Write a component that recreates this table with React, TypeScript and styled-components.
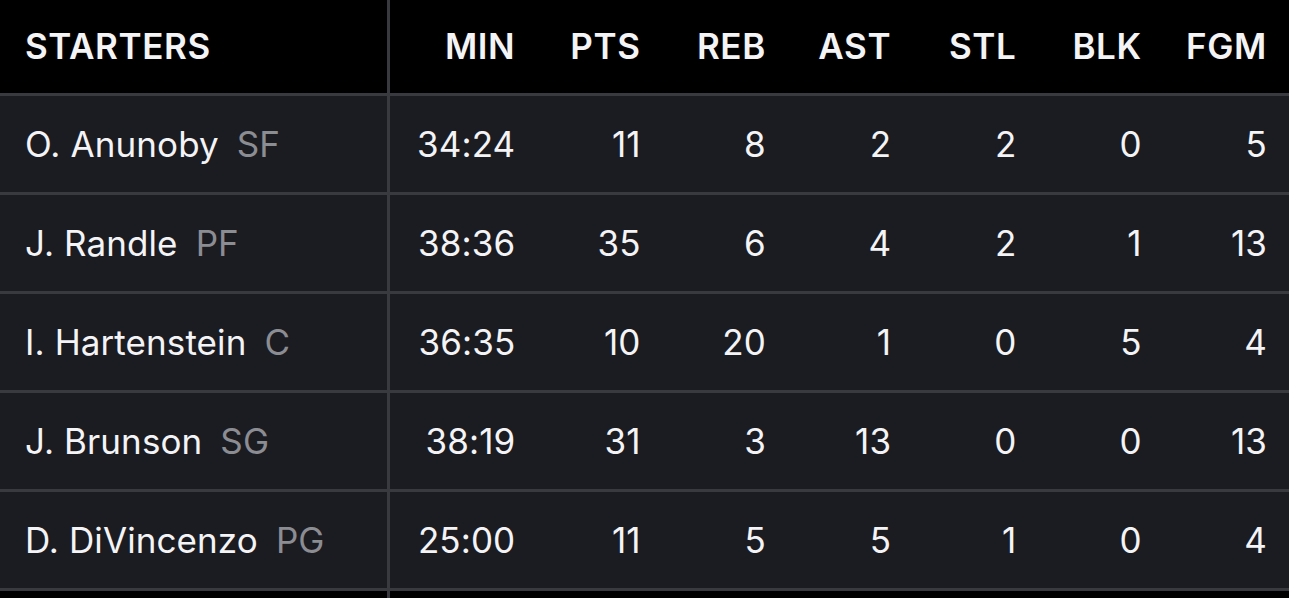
import React from "react";
import styled, { createGlobalStyle } from "styled-components";

const GlobalStyle = createGlobalStyle`
  html, body {
    margin: 0;
    padding: 0;
    background: #000;
  }
  body {
    font-family: Inter, "Open Sans", "Liberation Sans", sans-serif;
    -webkit-font-smoothing: antialiased;
  }
`;

const Table = styled.div`
  background: #000;
  display: grid;
  grid-template-columns: 387px 3px 1fr;
  height: 598px;
  overflow: hidden;
  width: 1289px;
`;

const NameCell = styled.div<{ $header?: boolean }>`
  align-items: center;
  background: ${(p) => (p.$header ? "#000" : "#1b1c22")};
  border-bottom: 3px solid #393a40;
  box-sizing: border-box;
  color: #f4f4f6;
  display: flex;
  font-size: 35px;
  font-weight: ${(p) => (p.$header ? 600 : 400)};
  height: ${(p) => (p.$header ? "96px" : "99px")};
  letter-spacing: ${(p) => (p.$header ? "0.6px" : "0.1px")};
  padding-bottom: ${(p) => (p.$header ? "2px" : "0")};
  padding-left: 25px;
  white-space: nowrap;
`;

const Position = styled.span`
  color: #8c8d93;
  margin-left: 18px;
`;

const Divider = styled.div`
  background: #393a40;
`;

const Stats = styled.div<{ $header?: boolean }>`
  align-items: center;
  background: ${(p) => (p.$header ? "#000" : "#1b1c22")};
  border-bottom: 3px solid #393a40;
  box-sizing: border-box;
  color: #f4f4f6;
  display: grid;
  font-size: 35px;
  font-weight: ${(p) => (p.$header ? 600 : 400)};
  grid-template-columns: repeat(7, 1fr);
  height: ${(p) => (p.$header ? "96px" : "99px")};
  letter-spacing: ${(p) => (p.$header ? "0.6px" : "0.1px")};
  padding-bottom: ${(p) => (p.$header ? "2px" : "0")};
  padding-right: 22px;
`;

const Stat = styled.div`
  text-align: right;
`;

const Filler = styled.div`
  background: #000;
  height: 20px;
`;

interface Player {
  name: string;
  pos: string;
  stats: string[];
}

const columns = ["MIN", "PTS", "REB", "AST", "STL", "BLK", "FGM"];

const players: Player[] = [
  { name: "O. Anunoby", pos: "SF", stats: ["34:24", "11", "8", "2", "2", "0", "5"] },
  { name: "J. Randle", pos: "PF", stats: ["38:36", "35", "6", "4", "2", "1", "13"] },
  { name: "I. Hartenstein", pos: "C", stats: ["36:35", "10", "20", "1", "0", "5", "4"] },
  { name: "J. Brunson", pos: "SG", stats: ["38:19", "31", "3", "13", "0", "0", "13"] },
  { name: "D. DiVincenzo", pos: "PG", stats: ["25:00", "11", "5", "5", "1", "0", "4"] },
];

const App: React.FunctionComponent = (): JSX.Element => {
  return (
    <>
      <GlobalStyle />
      <Table>
        <NameCell $header>STARTERS</NameCell>
        <Divider />
        <Stats $header>
          {columns.map((c) => (
            <Stat key={c}>{c}</Stat>
          ))}
        </Stats>
        {players.map((p) => (
          <React.Fragment key={p.name}>
            <NameCell>
              {p.name}
              <Position>{p.pos}</Position>
            </NameCell>
            <Divider />
            <Stats>
              {p.stats.map((s, i) => (
                <Stat key={i}>{s}</Stat>
              ))}
            </Stats>
          </React.Fragment>
        ))}
        <Filler />
        <Divider />
        <Filler />
      </Table>
    </>
  );
};

export default App;
